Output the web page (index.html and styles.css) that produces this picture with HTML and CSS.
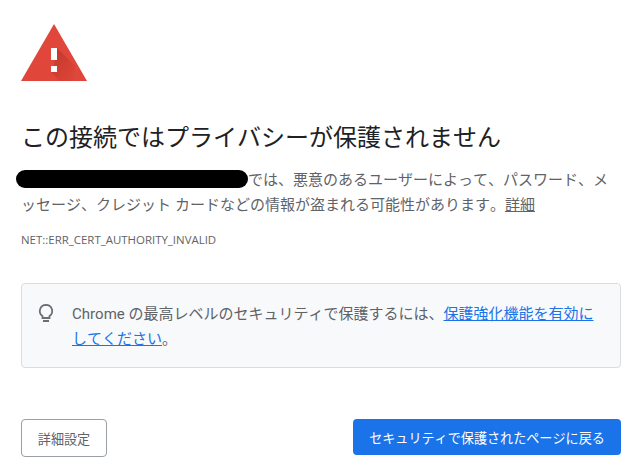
FILE: index.html
```html
<!DOCTYPE html>
<html lang="ja">
<head>
    <meta charset="UTF-8">
    <title>プライバシーエラー</title>
    <link rel="stylesheet" href="styles.css">
</head>
<body>
<div id="container">
    <svg class="warn-icon" width="66" height="58" viewBox="0 0 66 58">
        <defs>
            <linearGradient id="shade" x1="0" y1="0" x2="1" y2="1">
                <stop offset="0" stop-color="#a52a20" stop-opacity="0.55"/>
                <stop offset="1" stop-color="#a52a20" stop-opacity="0"/>
            </linearGradient>
        </defs>
        <path d="M33 0 L66 57 L0 57 Z" fill="#e0463a"/>
        <path d="M36 24 L54 42 L54 57 L39 57 L30 48 L30 42 L33 42 Z" fill="url(#shade)"/>
        <rect x="30" y="24" width="6" height="12" fill="#fff"/>
        <rect x="30" y="42" width="6" height="6" fill="#fff"/>
    </svg>
    <h1>この接続ではプライバシーが保護されません</h1>
    <p class="message"><span class="redact"></span>では、悪意のあるユーザーによって、パスワード、メッセージ、クレジット カードなどの情報が盗まれる可能性があります。<a href="#" class="plain-link">詳細</a></p>
    <div class="error-code">NET::ERR_CERT_AUTHORITY_INVALID</div>
    <div class="panel">
        <svg class="bulb" width="18" height="20" viewBox="0 0 18 20">
            <path d="M9 1.8a6.2 6.2 0 0 0-3.5 11.3V15h7v-1.9A6.2 6.2 0 0 0 9 1.8z" fill="none" stroke="#6b6f73" stroke-width="1.8"/>
            <path d="M6 18h6" stroke="#6b6f73" stroke-width="2"/>
        </svg>
        <p>Chrome の最高レベルのセキュリティで保護するには、<a href="#">保護強化機能を有効にしてください</a>。</p>
    </div>
    <div class="buttons">
        <button class="btn-detail">詳細設定</button>
        <button class="btn-back">セキュリティで保護されたページに戻る</button>
    </div>
</div>
</body>
</html>
```

FILE: styles.css
```css
*{
    margin: 0;
    padding: 0;
    box-sizing: border-box;
}
body{
    background: #fff;
    color: #5f6368;
    font-family: "Open Sans", "Noto Sans CJK JP", sans-serif;
    font-kerning: none;
}
#container{
    width: 640px;
    height: 476px;
    padding: 24px 19px 0 21px;
    overflow: hidden;
}
.warn-icon{
    display: block;
}
h1{
    margin-top: 40px;
    font-size: 24px;
    font-weight: 400;
    line-height: 30px;
    color: #202124;
}
.message{
    margin-top: 15px;
    font-size: 15px;
    line-height: 25px;
    line-break: anywhere;
}
.redact{
    display: inline-block;
    width: 232px;
    height: 18px;
    margin-left: -5px;
    border-radius: 9px;
    background: #000;
    vertical-align: -3px;
}
.plain-link{
    color: #5f6368;
}
.error-code{
    margin-top: 15px;
    font-size: 11.45px;
    line-height: 16px;
}
.panel{
    display: flex;
    height: 85px;
    margin-top: 35px;
    padding: 18px 24px 0 15px;
    background: #f8f9fa;
    border: 1px solid #dadce0;
    border-radius: 4px;
}
.bulb{
    flex: none;
    margin-top: 1px;
}
.panel p{
    margin-left: 17px;
    font-family: Roboto, "Noto Sans CJK JP", sans-serif;
    font-size: 15px;
    line-height: 25px;
    line-break: anywhere;
}
.panel a{
    color: #1a73e8;
}
.buttons{
    display: flex;
    justify-content: space-between;
    align-items: flex-start;
    margin-top: 51px;
}
button{
    font-family: inherit;
    font-size: 13.1px;
    font-kerning: none;
    border-radius: 4px;
}
.btn-detail{
    width: 86px;
    height: 38px;
    background: #fff;
    border: 1px solid #9aa0a6;
    color: #5f6368;
}
.btn-back{
    width: 268px;
    height: 36px;
    background: #1a73e8;
    border: none;
    color: #fff;
}
```
